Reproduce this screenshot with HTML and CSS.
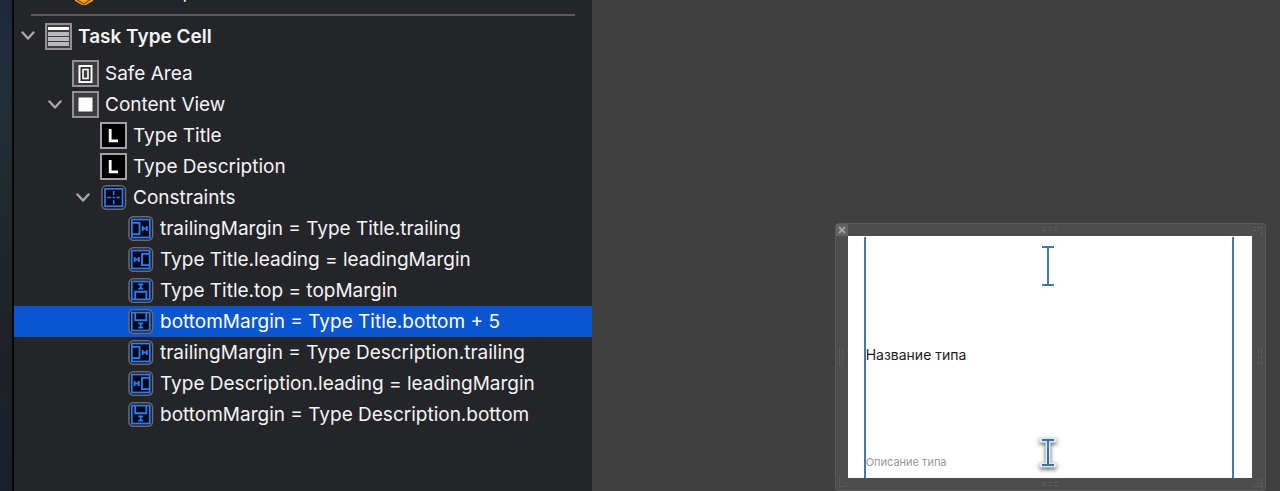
FILE: index.html
```html
<!DOCTYPE html>
<html lang="en">
<head>
    <meta charset="UTF-8">
    <meta name="viewport" content="width=device-width, initial-scale=1.0">
    <title>Task Type Cell</title>
    <link rel="stylesheet" href="styles.css">
</head>
<body>
    <svg class="sprite" aria-hidden="true">
        <symbol id="chevron" viewBox="0 0 14 10">
            <path d="M1.5 1.5 L7 7.5 L12.5 1.5" fill="none" stroke="#a8a8aa" stroke-width="2.4" stroke-linecap="round" stroke-linejoin="round"/>
        </symbol>
        <symbol id="cube" viewBox="0 0 27 27">
            <path d="M12 1 L21 6 V23 L12 28 L3 23 V6 Z" fill="#f0a024"/>
            <path d="M5 22 L12 26 L19 21" fill="none" stroke="#8a4d08" stroke-width="1.4"/>
        </symbol>
        <symbol id="table-cell" viewBox="0 0 27 27">
            <rect x="1" y="1" width="25" height="25" fill="#3d3d40" stroke="#929295" stroke-width="2"/>
            <rect x="3" y="4" width="21" height="3" fill="#fff"/>
            <path d="M3 9h21v4H3z M3 14h21v4H3z M3 19h21v4H3z" fill="#b9b9bb"/>
        </symbol>
        <symbol id="safe-area" viewBox="0 0 27 27">
            <rect x="1" y="1" width="25" height="25" fill="#3d3d40" stroke="#929295" stroke-width="2"/>
            <rect x="7.5" y="6" width="12" height="16" fill="#29292c" stroke="#fff" stroke-width="2"/>
            <rect x="11" y="9.5" width="5" height="9" fill="#3d3d40" stroke="#fff" stroke-width="1.6"/>
        </symbol>
        <symbol id="view" viewBox="0 0 27 27">
            <rect x="1" y="1" width="25" height="25" fill="#3d3d40" stroke="#929295" stroke-width="2"/>
            <rect x="6.5" y="6.5" width="14" height="14" fill="#fff"/>
        </symbol>
        <symbol id="label" viewBox="0 0 27 27">
            <rect x="1" y="1" width="25" height="25" fill="#000" stroke="#a2a2a4" stroke-width="2"/>
            <path d="M10.2 7 V18.8 H18" fill="none" stroke="#fff" stroke-width="2.8"/>
        </symbol>
        <symbol id="constraints" viewBox="0 0 27 27">
            <rect x="2" y="1.8" width="23.5" height="23.5" rx="4.5" fill="#0b0d12" stroke="#6c6c70" stroke-width="1.5"/>
            <rect x="5" y="4.8" width="17.5" height="17.5" fill="#020713" stroke="#2c7df5" stroke-width="1.7"/>
            <path d="M13.7 7v4 M13.7 12.6v2 M13.7 16.2v4 M7.2 13.6h4 M12.7 13.6h2 M16.2 13.6h4" stroke="#2c7df5" stroke-width="1.5"/>
        </symbol>
        <symbol id="trailing" viewBox="0 0 27 27">
            <rect x="2" y="1.8" width="23.5" height="23.5" rx="4.5" fill="#0b0d12" stroke="#6c6c70" stroke-width="1.5"/>
            <rect x="4.8" y="4.5" width="18" height="18" fill="#020713" stroke="#2c7df5" stroke-width="1.8"/>
            <path d="M5 7.9h7.5v11.2H5 M15.7 11v5 M19.9 11v5 M15.7 13.5h4.2" fill="none" stroke="#2c7df5" stroke-width="1.8"/>
        </symbol>
        <symbol id="leading" viewBox="0 0 27 27">
            <use href="#trailing" width="27" height="27" transform="rotate(180 13.75 13.5)"/>
        </symbol>
        <symbol id="top" viewBox="0 0 27 27">
            <use href="#trailing" width="27" height="27" transform="rotate(-90 13.75 13.5)"/>
        </symbol>
        <symbol id="bottom" viewBox="0 0 27 27">
            <use href="#trailing" width="27" height="27" transform="rotate(90 13.75 13.5)"/>
        </symbol>
        <symbol id="grip" viewBox="0 0 16 6">
            <path d="M0 1.5h4 M6 1.5h4 M12 1.5h4 M0 4.5h4 M6 4.5h4 M12 4.5h4" stroke="#5c5c5c"/>
        </symbol>
        <symbol id="corner" viewBox="0 0 10 10">
            <path d="M0 1.5h3 M4 1.5h6 M8.5 2v3 M8.5 6v4 M0 4.5h3 M5.5 4v2" fill="none" stroke="#5c5c5c"/>
        </symbol>
    </svg>

    <div class="desktop"></div>

    <nav class="outline">
        <div class="row">
            <span class="toggle"></span>
            <svg class="icon"><use href="#cube"/></svg>
            <span>First Responder</span>
        </div>
        <hr>
        <div class="row root">
            <button class="toggle" aria-label="Collapse Task Type Cell"><svg><use href="#chevron"/></svg></button>
            <svg class="icon"><use href="#table-cell"/></svg>
            <span>Task Type Cell</span>
        </div>
        <ul class="tree">
            <li class="row level-1">
                <span class="toggle"></span>
                <svg class="icon"><use href="#safe-area"/></svg>
                <span>Safe Area</span>
            </li>
            <li class="row level-1">
                <button class="toggle" aria-label="Collapse Content View"><svg><use href="#chevron"/></svg></button>
                <svg class="icon"><use href="#view"/></svg>
                <span>Content View</span>
            </li>
            <li class="row level-2">
                <span class="toggle"></span>
                <svg class="icon"><use href="#label"/></svg>
                <span>Type Title</span>
            </li>
            <li class="row level-2">
                <span class="toggle"></span>
                <svg class="icon"><use href="#label"/></svg>
                <span>Type Description</span>
            </li>
            <li class="row level-2">
                <button class="toggle" aria-label="Collapse Constraints"><svg><use href="#chevron"/></svg></button>
                <svg class="icon"><use href="#constraints"/></svg>
                <span>Constraints</span>
            </li>
            <li class="row level-3">
                <span class="toggle"></span>
                <svg class="icon"><use href="#trailing"/></svg>
                <span>trailingMargin = Type Title.trailing</span>
            </li>
            <li class="row level-3">
                <span class="toggle"></span>
                <svg class="icon"><use href="#leading"/></svg>
                <span>Type Title.leading = leadingMargin</span>
            </li>
            <li class="row level-3">
                <span class="toggle"></span>
                <svg class="icon"><use href="#top"/></svg>
                <span>Type Title.top = topMargin</span>
            </li>
            <li class="row level-3 selected">
                <span class="toggle"></span>
                <svg class="icon"><use href="#bottom"/></svg>
                <span>bottomMargin = Type Title.bottom + 5</span>
            </li>
            <li class="row level-3">
                <span class="toggle"></span>
                <svg class="icon"><use href="#trailing"/></svg>
                <span>trailingMargin = Type Description.trailing</span>
            </li>
            <li class="row level-3">
                <span class="toggle"></span>
                <svg class="icon"><use href="#leading"/></svg>
                <span>Type Description.leading = leadingMargin</span>
            </li>
            <li class="row level-3">
                <span class="toggle"></span>
                <svg class="icon"><use href="#bottom"/></svg>
                <span>bottomMargin = Type Description.bottom</span>
            </li>
        </ul>
    </nav>

    <main class="canvas">
        <div class="scene">
            <button class="close" aria-label="Close">
                <svg viewBox="0 0 10 10"><path d="M2 2 L8 8 M8 2 L2 8" stroke="#a0a0a0" stroke-width="2"/></svg>
            </button>
            <svg class="grip grip-top"><use href="#grip"/></svg>
            <svg class="grip grip-bottom"><use href="#grip"/></svg>
            <svg class="grip grip-left"><use href="#grip"/></svg>
            <svg class="grip grip-right"><use href="#grip"/></svg>
            <svg class="corner corner-tr"><use href="#corner"/></svg>
            <svg class="corner corner-br"><use href="#corner"/></svg>
            <svg class="corner corner-bl"><use href="#corner"/></svg>
            <div class="cell">
                <p class="title">Название типа</p>
                <p class="description">Описание типа</p>
                <svg class="beam beam-top" viewBox="0 0 14 40">
                    <path d="M1 1h12 M7 1v38 M1 39h12" stroke="#4877a8" stroke-width="2"/>
                </svg>
                <svg class="beam beam-bottom" viewBox="0 0 24 36">
                    <path d="M6 5h12 M12 5v25 M6 30h12" stroke="#d9ebfa" stroke-width="5" stroke-linecap="square"/>
                    <path d="M6 5h12 M12 5v25 M6 30h12" stroke="#41709f" stroke-width="2"/>
                </svg>
            </div>
        </div>
    </main>
</body>
</html>
```
FILE: styles.css
```css
body {
    font-family: Inter, "Liberation Sans", sans-serif;
    margin: 0;
    display: flex;
    height: 100vh;
    overflow: hidden;
    background-color: #404040;
}
.sprite {
    position: absolute;
    width: 0;
    height: 0;
}
.desktop {
    width: 12px;
    flex-shrink: 0;
    background: linear-gradient(#1c2a38, #20303a 20%, #20292c 40%, #1e2226 70%, #1b1f2b);
    border-right: 2px solid #060607;
}

/* document outline */
.outline {
    width: 578px;
    flex-shrink: 0;
    margin-top: -24px;
    background-color: #242529;
    color: #f4f4f5;
    font-size: 19px;
}
.outline hr {
    height: 2px;
    margin: 7px 17px 0;
    border: none;
    background-color: #5b5b5f;
}
.tree {
    list-style: none;
    margin: 0;
    padding: 0;
}
.row {
    display: flex;
    align-items: center;
    height: 31px;
    padding-left: 34px;
    white-space: nowrap;
}
.root {
    height: 40px;
    margin-bottom: 2px;
    padding-left: 7px;
    font-weight: 600;
}
.level-2 {
    padding-left: 62px;
}
.level-3 {
    padding-left: 89px;
}
.selected {
    background-color: #0a56d2;
    color: #ffffff;
}
.toggle {
    display: block;
    width: 14px;
    height: 10px;
    margin-right: 10px;
    padding: 0;
    border: none;
    background: none;
}
.toggle svg {
    display: block;
    width: 14px;
    height: 10px;
}
.icon {
    width: 27px;
    height: 27px;
    margin-right: 6px;
}

/* canvas with the cell being edited */
.canvas {
    flex: 1;
    display: flex;
    justify-content: flex-end;
    align-items: flex-end;
    padding-right: 14px;
}
.scene {
    position: relative;
    box-sizing: border-box;
    width: 64%;
    padding: 12px 13px 12px 12px;
    background-color: #4d4d4d;
    border: 1px solid #5a5a5a;
    border-radius: 4px;
}
.close {
    position: absolute;
    top: 0;
    left: 0;
    width: 12px;
    height: 12px;
    padding: 1px;
    border: none;
    background-color: #626262;
}
.close svg {
    display: block;
}
.grip {
    position: absolute;
    width: 16px;
    height: 6px;
}
.grip-top {
    top: 2px;
    left: calc(50% - 8px);
}
.grip-bottom {
    bottom: 3px;
    left: calc(50% - 8px);
}
.grip-left {
    top: calc(50% - 3px);
    left: -3px;
    transform: rotate(90deg);
}
.grip-right {
    top: calc(50% - 3px);
    right: -3px;
    transform: rotate(90deg);
}
.corner {
    position: absolute;
    width: 10px;
    height: 10px;
}
.corner-tr {
    top: 2px;
    right: 2px;
}
.corner-br {
    bottom: 2px;
    right: 2px;
    transform: rotate(90deg);
}
.corner-bl {
    bottom: 2px;
    left: 2px;
    transform: rotate(180deg);
}
.cell {
    position: relative;
    display: flex;
    flex-direction: column;
    height: 242px;
    padding: 0 18px 0 16px;
    background-color: #ffffff;
}
.cell::before {
    content: "";
    position: absolute;
    top: 1px;
    bottom: 0;
    left: 16px;
    right: 18px;
    border-left: 2px solid #4877a8;
    border-right: 2px solid #4877a8;
}
.cell p {
    margin: 0 0 0 2px;
}
.title {
    padding-top: 109px;
    font-size: 14px;
    line-height: 20px;
    color: #1c1c1c;
}
.cell .description {
    margin-top: auto;
    margin-bottom: 8px;
    font-size: 11px;
    line-height: 16px;
    color: #9a9a9a;
}
.beam {
    position: absolute;
}
.beam-top {
    top: 10px;
    left: calc(50% - 9px);
    width: 14px;
    height: 40px;
}
.beam-bottom {
    bottom: 7px;
    left: calc(50% - 14px);
    width: 24px;
    height: 36px;
    filter: drop-shadow(0 2px 2px #00000099);
}
```
